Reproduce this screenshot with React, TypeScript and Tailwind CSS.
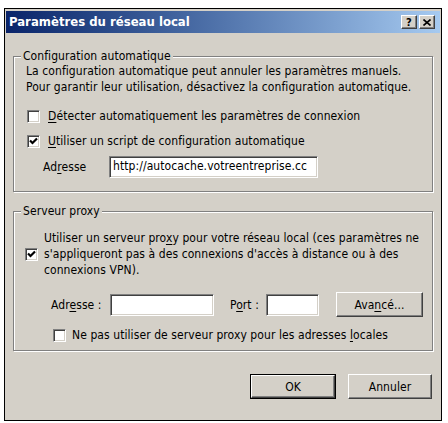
import type { ReactNode } from "react";

const font = "font-['DejaVu_Sans_Condensed','DejaVu_Sans',sans-serif]";

const sunken =
  "border border-t-[#808080] border-l-[#808080] border-b-white border-r-white shadow-[inset_1px_1px_0_#404040,inset_-1px_-1px_0_#d4d0c8]";

const Check = ({ checked }: { checked?: boolean }) => (
  <div className={`w-[13px] h-[13px] shrink-0 bg-white ${sunken}`}>
    {checked && (
      <svg width="11" height="11" viewBox="0 0 11 11" className="block">
        <path d="M2 4.5 L4.5 7 L9 2.5" stroke="#000" strokeWidth="2.2" fill="none" />
      </svg>
    )}
  </div>
);

const U = ({ children }: { children: ReactNode }) => <span className="underline underline-offset-2">{children}</span>;

const Field = ({ w, value }: { w: string; value?: string }) => (
  <div className={`${w} h-[22px] bg-white ${sunken} pl-[3px] overflow-hidden whitespace-nowrap leading-[18px] text-black`}>
    {value}
  </div>
);

const Button = ({ children, isDefault, w }: { children: ReactNode; isDefault?: boolean; w: string }) => (
  <div className={`${w} h-[25px] ${isDefault ? "border border-black" : ""}`}>
    <div className="h-full border border-t-white border-l-white border-b-[#404040] border-r-[#404040] shadow-[inset_-1px_-1px_0_#808080,inset_1px_1px_0_#d4d0c8] flex items-center justify-center">
      {children}
    </div>
  </div>
);

const TitleBtn = ({ children }: { children: ReactNode }) => (
  <div className="w-[16px] h-[14px] bg-[#d4d0c8] border border-t-white border-l-white border-b-[#404040] border-r-[#404040] shadow-[inset_-1px_-1px_0_#808080] flex items-center justify-center">
    {children}
  </div>
);

export default function App() {
  return (
    <div className={`min-h-screen bg-white pt-[8px] pl-[4px] ${font} text-[12px] tracking-[0.08px] text-black`}>
      <div className="w-[438px] h-[413px] border border-black bg-[#d4d0c8] p-[1px]">
        {/* title bar */}
        <div className="mt-[1px] h-[22px] bg-gradient-to-r from-[#0a246a] to-[#a6caf0] flex items-center pl-[3px] pr-[5px]">
          <span className="text-white font-bold text-[13px] tracking-[0px]">Paramètres du réseau local</span>
          <div className="ml-auto flex gap-[2px]">
            <TitleBtn>
              <span className="font-bold text-[11px] leading-none mt-[1px]">?</span>
            </TitleBtn>
            <TitleBtn>
              <svg width="8" height="7" viewBox="0 0 8 7">
                <path d="M0.5 0.5 L7.5 6.5 M7.5 0.5 L0.5 6.5" stroke="#000" strokeWidth="1.6" />
              </svg>
            </TitleBtn>
          </div>
        </div>

        {/* group 1 */}
        <fieldset className="ml-[7px] mt-[16px] w-[420px] h-[143px] border border-[#808080] shadow-[1px_1px_0_#fff,inset_1px_1px_0_#fff] pl-[7px] pr-[4px]">
          <legend className="px-[2px] bg-[#d4d0c8] leading-[14px]">Configuration automatique</legend>
          <div className="pl-[5px]">
            <p className="leading-[16px]">
              La configuration automatique peut annuler les paramètres manuels.
              <br />
              Pour garantir leur utilisation, désactivez la configuration automatique.
            </p>
            <label className="mt-[13px] h-[16px] flex items-center gap-[8px] pl-[1px]">
              <Check />
              <span><U>D</U>étecter automatiquement les paramètres de connexion</span>
            </label>
            <label className="mt-[9px] h-[16px] flex items-center gap-[8px] pl-[1px]">
              <Check checked />
              <span><U>U</U>tiliser un script de configuration automatique</span>
            </label>
            <div className="mt-[7px] flex items-center pl-[17px]">
              <span className="w-[66px]">Ad<U>r</U>esse</span>
              <Field w="w-[209px]" value="http://autocache.votreentreprise.cc" />
            </div>
          </div>
        </fieldset>

        {/* group 2 */}
        <fieldset className="ml-[7px] mt-[12px] w-[420px] h-[147px] border border-[#808080] shadow-[1px_1px_0_#fff,inset_1px_1px_0_#fff] pl-[7px] pr-[4px]">
          <legend className="px-[2px] bg-[#d4d0c8] leading-[14px]">Serveur proxy</legend>
          <div className="pl-[4px]">
            <label className="mt-[12px] flex items-center gap-[6px]">
              <Check checked />
              <span className="leading-[16px]">
                Utiliser un serveur pro<U>x</U>y pour votre réseau local (ces paramètres ne
                <br />
                s'appliqueront pas à des connexions d'accès à distance ou à des
                <br />
                connexions VPN).
              </span>
            </label>
            <div className="mt-[14px] h-[25px] flex items-center pl-[26px]">
              <span className="w-[59px]">Adr<U>e</U>sse :</span>
              <Field w="w-[104px]" />
              <span className="ml-[16px] w-[36px]">P<U>o</U>rt :</span>
              <Field w="w-[53px]" />
              <div className="ml-[17px]">
                <Button w="w-[87px]">Ava<U>n</U>cé...</Button>
              </div>
            </div>
            <label className="mt-[10px] h-[16px] flex items-center gap-[6px] pl-[28px]">
              <Check />
              <span>Ne pas utiliser de serveur proxy pour les adresses <U>l</U>ocales</span>
            </label>
          </div>
        </fieldset>

        {/* buttons */}
        <div className="mt-[23px] flex justify-end gap-[12px] pr-[8px]">
          <Button w="w-[86px]" isDefault>OK</Button>
          <Button w="w-[84px]">Annuler</Button>
        </div>
      </div>
    </div>
  );
}
